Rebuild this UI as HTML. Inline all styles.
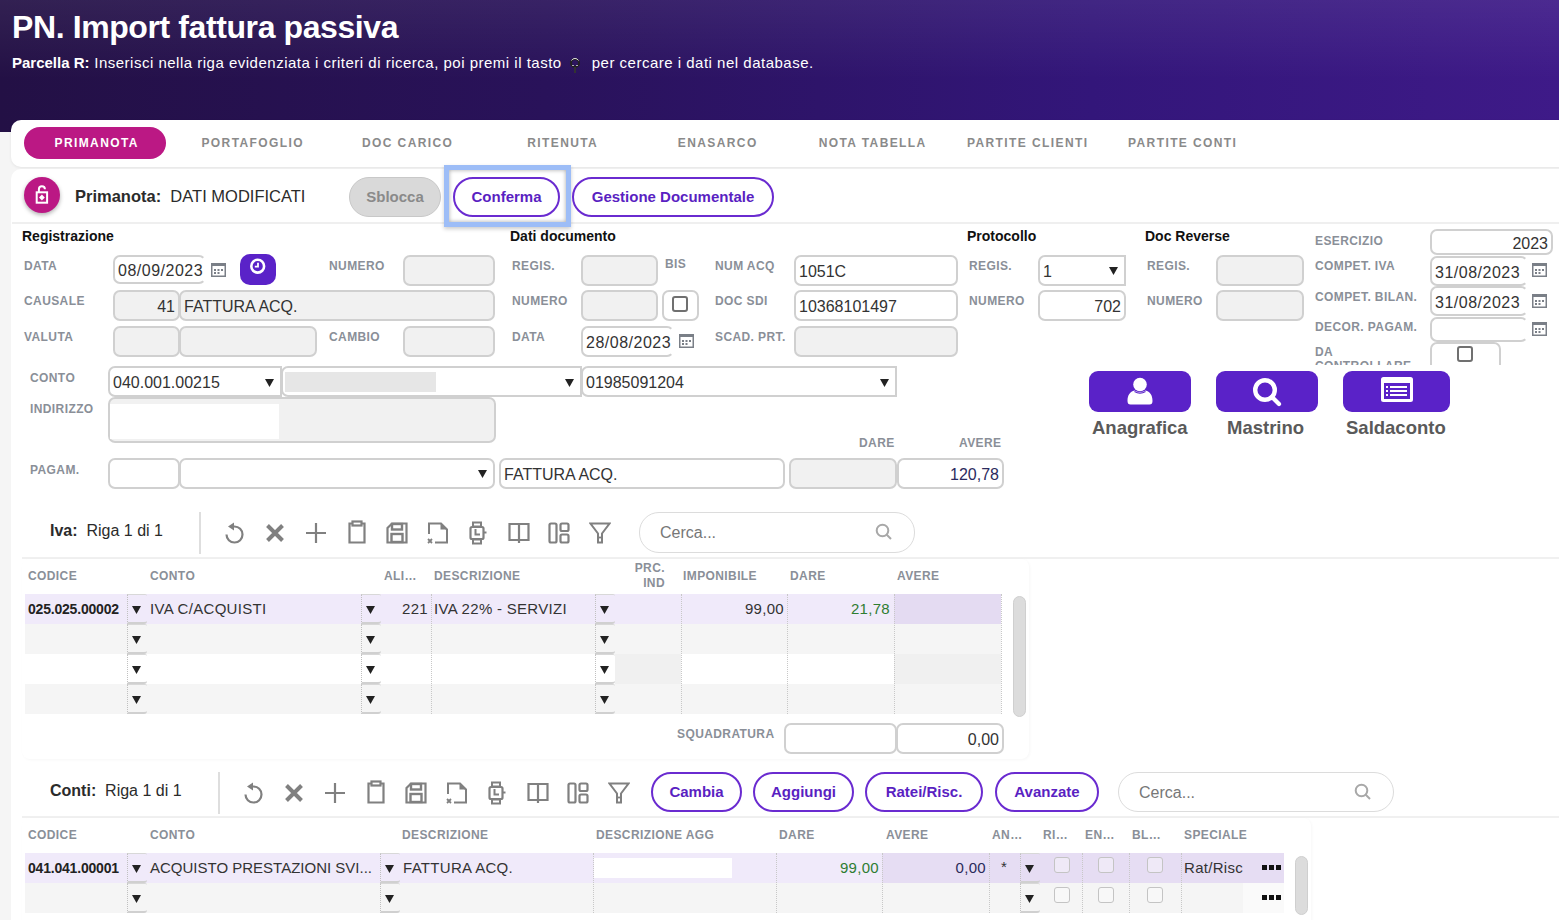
<!DOCTYPE html>
<html><head><meta charset="utf-8">
<style>
*{box-sizing:border-box;margin:0;padding:0}
html,body{width:1559px;height:920px;overflow:hidden;background:#f5f5f5;font-family:"Liberation Sans",sans-serif;color:#333}
.a{position:absolute}
#hdr{position:absolute;left:0;top:0;width:1559px;height:132px;background:linear-gradient(90deg,#231045 0%,#29125a 35%,#33167a 70%,#3e1a88 100%)}
#hdr:after{content:"";position:absolute;left:0;top:0;right:0;bottom:0;background:linear-gradient(180deg,rgba(255,255,255,.07),rgba(255,255,255,0) 60%)}
.title{left:12px;top:9px;font-size:32px;letter-spacing:-.4px;font-weight:bold;color:#fff;white-space:nowrap}
.sub{left:12px;top:54px;font-size:15px;letter-spacing:.5px;color:#fff;white-space:nowrap}
.card{position:absolute;background:#fff}
.tab{position:absolute;top:127px;height:32px;width:142px;text-align:center;line-height:33px;font-size:12px;font-weight:bold;letter-spacing:1.4px;padding-left:3.4px;color:#8a8a8a}
.tab.on{background:#bb1884;color:#fff;border-radius:16px}
.lb{position:absolute;font-size:12px;font-weight:bold;color:#8a8f98;letter-spacing:.4px;white-space:nowrap;line-height:14px}
.h{position:absolute;font-size:14px;font-weight:bold;color:#111;white-space:nowrap;line-height:16px}
.in{position:absolute;border:2px solid #d0d0d0;border-radius:7px;background:#fff;font-size:16px;color:#333;padding:1px 3px 0;white-space:nowrap;overflow:hidden}
.g{background:#f1f1f1}
.r{text-align:right}
.pill{position:absolute;height:40px;border-radius:20px;border:2px solid #6a2bd0;background:#fff;color:#5a1fc2;font-weight:bold;font-size:15px;text-align:center;line-height:36px;white-space:nowrap}
</style></head><body>
<div id="hdr"></div>
<div class="a title">PN. Import fattura passiva</div>
<svg class="a" style="left:569px;top:57px" width="12" height="17" viewBox="0 0 12 17"><circle cx="6" cy="6" r="4" fill="none" stroke="#222" stroke-width="2"/><path d="M2.5 3.5a4 4 0 0 1 7 0" fill="none" stroke="#ddd" stroke-width="1"/><path d="M6 10V16" stroke="#333" stroke-width="2"/><path d="M3.3 8.5h1.4M7.3 8.5h1.4" stroke="#eee" stroke-width="1"/></svg>
<div class="a sub"><b style="letter-spacing:0">Parcella R:</b> Inserisci nella riga evidenziata i criteri di ricerca, poi premi il tasto<span style="display:inline-block;width:30px"></span>per cercare i dati nel database.</div>
<div class="card" style="left:11px;top:120px;width:1560px;height:47px;border-radius:10px 0 0 10px;box-shadow:0 1px 3px rgba(0,0,0,.07)"></div>
<div class="tab on" style="left:24px">PRIMANOTA</div>
<div class="tab" style="left:180px">PORTAFOGLIO</div>
<div class="tab" style="left:335px">DOC CARICO</div>
<div class="tab" style="left:490px">RITENUTA</div>
<div class="tab" style="left:645px">ENASARCO</div>
<div class="tab" style="left:800px">NOTA TABELLA</div>
<div class="tab" style="left:955px">PARTITE CLIENTI</div>
<div class="tab" style="left:1110px">PARTITE CONTI</div>
<div class="card" style="left:11px;top:169px;width:1560px;height:760px;border-radius:10px 0 0 0"></div>
<div class="a" style="left:12px;top:222px;width:1560px;height:1.5px;background:#efefef"></div>
<div class="a" style="left:24px;top:177px;width:36px;height:36px;border-radius:50%;background:#bb1884;box-shadow:0 2px 4px rgba(0,0,0,.3)"></div>
<svg class="a" style="left:34px;top:184px" width="16" height="22" viewBox="0 0 16 22"><path d="M4.9 8.3V5.2A3 3 0 0 1 10.9 5.2" fill="none" stroke="#fff" stroke-width="2"/><rect x="2.7" y="8.3" width="10.4" height="10.4" fill="none" stroke="#fff" stroke-width="2"/><path d="M7.9 10.6L10.8 13.5L7.9 16.4L5 13.5z" fill="#fff"/></svg>
<div class="a" style="left:75px;top:187px;font-size:16.5px;color:#2b2b2b;white-space:nowrap"><b>Primanota:</b>&nbsp; DATI MODIFICATI</div>
<div class="a" style="left:349px;top:177px;width:92px;height:40px;border-radius:20px;background:#d9d9d9;border:1.5px solid #c8c8c8;color:#8a8a8a;font-weight:bold;font-size:15px;text-align:center;line-height:37px">Sblocca</div>
<div class="a" style="left:444px;top:165px;width:127px;height:62px;border:5px solid #9dbdf7;box-shadow:inset 0 0 4px rgba(0,0,0,.35),0 2px 4px rgba(0,0,0,.2)"></div>
<div class="pill" style="left:453px;top:177px;width:107px">Conferma</div>
<div class="pill" style="left:572px;top:177px;width:202px">Gestione Documentale</div>
<div class="h" style="left:22px;top:228px">Registrazione</div>
<div class="h" style="left:510px;top:228px">Dati documento</div>
<div class="h" style="left:967px;top:228px">Protocollo</div>
<div class="h" style="left:1145px;top:228px">Doc Reverse</div>
<div class="lb" style="left:24px;top:258.5px;">DATA</div>
<div class="in" style="left:113px;top:255px;width:93px;height:29px;line-height:26px;border-right-color:transparent;letter-spacing:.5px">08/09/2023</div>
<svg class="a" style="left:211px;top:263px" width="15" height="14" viewBox="0 0 15 14"><rect x="0.75" y="0.75" width="13.5" height="12.5" fill="none" stroke="#7a7f87" stroke-width="1.5"/><rect x="0" y="0" width="15" height="3" fill="#7a7f87"/><rect x="3" y="6" width="2" height="2" fill="#7a7f87"/><rect x="6.5" y="6" width="2" height="2" fill="#7a7f87"/><rect x="10" y="6" width="2" height="2" fill="#7a7f87"/><rect x="3" y="9" width="2" height="2" fill="#7a7f87"/><rect x="6.5" y="9" width="2" height="2" fill="#7a7f87"/></svg>
<div class="a" style="left:240px;top:254px;width:36px;height:31px;border-radius:10px;background:#5a22c8"></div>
<svg class="a" style="left:249px;top:257px" width="18" height="18" viewBox="0 0 18 18"><circle cx="8.7" cy="9.2" r="6.4" fill="none" stroke="#fff" stroke-width="2.6"/><path d="M9 5.8V9.6H5.8" fill="none" stroke="#fff" stroke-width="1.8"/></svg>
<div class="lb" style="left:329px;top:258.5px;">NUMERO</div>
<div class="in g" style="left:403px;top:255px;width:92px;height:31px;line-height:28px;"></div>
<div class="lb" style="left:24px;top:293.5px;">CAUSALE</div>
<div class="in g r" style="left:113px;top:290px;width:67px;height:31px;line-height:28px;">41</div>
<div class="in g" style="left:179px;top:290px;width:316px;height:31px;line-height:28px;">FATTURA ACQ.</div>
<div class="lb" style="left:24px;top:329.5px;">VALUTA</div>
<div class="in g" style="left:113px;top:326px;width:67px;height:31px;line-height:28px;"></div>
<div class="in g" style="left:179px;top:326px;width:138px;height:31px;line-height:28px;"></div>
<div class="lb" style="left:329px;top:329.5px;">CAMBIO</div>
<div class="in g" style="left:403px;top:326px;width:92px;height:31px;line-height:28px;"></div>
<div class="lb" style="left:512px;top:258.5px;">REGIS.</div>
<div class="in g" style="left:581px;top:255px;width:77px;height:31px;line-height:28px;"></div>
<div class="lb" style="left:665px;top:256.5px;">BIS</div>
<div class="lb" style="left:512px;top:293.5px;">NUMERO</div>
<div class="in g" style="left:581px;top:290px;width:77px;height:31px;line-height:28px;"></div>
<div class="in" style="left:662px;top:290px;width:37px;height:31px;line-height:28px;"></div>
<div class="a" style="left:672px;top:295.5px;width:16px;height:16px;border:2px solid #707070;border-radius:3px;background:#fff"></div>
<div class="lb" style="left:512px;top:329.5px;">DATA</div>
<div class="in" style="left:581px;top:326px;width:93px;height:31px;line-height:28px;border-right-color:transparent;letter-spacing:.5px">28/08/2023</div>
<svg class="a" style="left:679px;top:334px" width="15" height="14" viewBox="0 0 15 14"><rect x="0.75" y="0.75" width="13.5" height="12.5" fill="none" stroke="#7a7f87" stroke-width="1.5"/><rect x="0" y="0" width="15" height="3" fill="#7a7f87"/><rect x="3" y="6" width="2" height="2" fill="#7a7f87"/><rect x="6.5" y="6" width="2" height="2" fill="#7a7f87"/><rect x="10" y="6" width="2" height="2" fill="#7a7f87"/><rect x="3" y="9" width="2" height="2" fill="#7a7f87"/><rect x="6.5" y="9" width="2" height="2" fill="#7a7f87"/></svg>
<div class="lb" style="left:715px;top:258.5px;">NUM ACQ</div>
<div class="in" style="left:794px;top:255px;width:164px;height:31px;line-height:28px;">1051C</div>
<div class="lb" style="left:715px;top:293.5px;">DOC SDI</div>
<div class="in" style="left:794px;top:290px;width:164px;height:31px;line-height:28px;">10368101497</div>
<div class="lb" style="left:715px;top:329.5px;">SCAD. PRT.</div>
<div class="in g" style="left:794px;top:326px;width:164px;height:31px;line-height:28px;"></div>
<div class="lb" style="left:969px;top:258.5px;">REGIS.</div>
<div class="in" style="left:1038px;top:255px;width:88px;height:31px;line-height:28px;border-radius:7px 0 0 7px">1</div>
<svg class="a" style="left:1109px;top:267px" width="9" height="8" viewBox="0 0 9 8"><path d="M0 0H9L4.5 8z" fill="#222"/></svg>
<div class="lb" style="left:969px;top:293.5px;">NUMERO</div>
<div class="in r" style="left:1038px;top:290px;width:88px;height:31px;line-height:28px;">702</div>
<div class="lb" style="left:1147px;top:258.5px;">REGIS.</div>
<div class="in g" style="left:1216px;top:255px;width:88px;height:31px;line-height:28px;"></div>
<div class="lb" style="left:1147px;top:293.5px;">NUMERO</div>
<div class="in g" style="left:1216px;top:290px;width:88px;height:31px;line-height:28px;"></div>
<div class="lb" style="left:1315px;top:233.5px;">ESERCIZIO</div>
<div class="in r" style="left:1430px;top:229px;width:123px;height:26px;line-height:23px;">2023</div>
<div class="lb" style="left:1315px;top:258.5px;">COMPET. IVA</div>
<div class="in" style="left:1430px;top:256px;width:98px;height:30px;line-height:27px;border-right-color:transparent;letter-spacing:.5px">31/08/2023</div>
<svg class="a" style="left:1532px;top:263px" width="15" height="14" viewBox="0 0 15 14"><rect x="0.75" y="0.75" width="13.5" height="12.5" fill="none" stroke="#7a7f87" stroke-width="1.5"/><rect x="0" y="0" width="15" height="3" fill="#7a7f87"/><rect x="3" y="6" width="2" height="2" fill="#7a7f87"/><rect x="6.5" y="6" width="2" height="2" fill="#7a7f87"/><rect x="10" y="6" width="2" height="2" fill="#7a7f87"/><rect x="3" y="9" width="2" height="2" fill="#7a7f87"/><rect x="6.5" y="9" width="2" height="2" fill="#7a7f87"/></svg>
<div class="lb" style="left:1315px;top:289.5px;">COMPET. BILAN.</div>
<div class="in" style="left:1430px;top:286px;width:98px;height:30px;line-height:27px;border-right-color:transparent;letter-spacing:.5px">31/08/2023</div>
<svg class="a" style="left:1532px;top:294px" width="15" height="14" viewBox="0 0 15 14"><rect x="0.75" y="0.75" width="13.5" height="12.5" fill="none" stroke="#7a7f87" stroke-width="1.5"/><rect x="0" y="0" width="15" height="3" fill="#7a7f87"/><rect x="3" y="6" width="2" height="2" fill="#7a7f87"/><rect x="6.5" y="6" width="2" height="2" fill="#7a7f87"/><rect x="10" y="6" width="2" height="2" fill="#7a7f87"/><rect x="3" y="9" width="2" height="2" fill="#7a7f87"/><rect x="6.5" y="9" width="2" height="2" fill="#7a7f87"/></svg>
<div class="lb" style="left:1315px;top:319.5px;">DECOR. PAGAM.</div>
<div class="in" style="left:1430px;top:317px;width:98px;height:25px;line-height:22px;border-right-color:transparent"></div>
<svg class="a" style="left:1532px;top:322px" width="15" height="14" viewBox="0 0 15 14"><rect x="0.75" y="0.75" width="13.5" height="12.5" fill="none" stroke="#7a7f87" stroke-width="1.5"/><rect x="0" y="0" width="15" height="3" fill="#7a7f87"/><rect x="3" y="6" width="2" height="2" fill="#7a7f87"/><rect x="6.5" y="6" width="2" height="2" fill="#7a7f87"/><rect x="10" y="6" width="2" height="2" fill="#7a7f87"/><rect x="3" y="9" width="2" height="2" fill="#7a7f87"/><rect x="6.5" y="9" width="2" height="2" fill="#7a7f87"/></svg>
<div class="a" style="left:1300px;top:342px;width:259px;height:23px;overflow:hidden">
<div class="lb" style="left:15px;top:3px;line-height:14px">DA<br>CONTROLLARE</div>
<div class="in" style="left:130px;top:0px;width:71px;height:30px"></div>
</div>
<div class="a" style="left:1457px;top:346px;width:16px;height:16px;border:2px solid #707070;border-radius:3px;background:#fff"></div>
<div class="lb" style="left:30px;top:370.5px;">CONTO</div>
<div class="in" style="left:108px;top:366px;width:174px;height:31px;line-height:28px;border-radius:7px 0 0 7px">040.001.00215</div>
<svg class="a" style="left:264.5px;top:379px" width="9" height="8" viewBox="0 0 9 8"><path d="M0 0H9L4.5 8z" fill="#222"/></svg>
<div class="in" style="left:281px;top:366px;width:301px;height:31px;line-height:28px;border-radius:7px 0 0 7px"></div>
<div class="a" style="left:285px;top:372px;width:151px;height:20px;background:#e6e6e6"></div>
<svg class="a" style="left:564.5px;top:379px" width="9" height="8" viewBox="0 0 9 8"><path d="M0 0H9L4.5 8z" fill="#222"/></svg>
<div class="in" style="left:581px;top:366px;width:316px;height:31px;line-height:28px;border-radius:7px 0 0 7px">01985091204</div>
<svg class="a" style="left:879.5px;top:379px" width="9" height="8" viewBox="0 0 9 8"><path d="M0 0H9L4.5 8z" fill="#222"/></svg>
<div class="lb" style="left:30px;top:401.5px;">INDIRIZZO</div>
<div class="in g" style="left:108px;top:397px;width:388px;height:46px;line-height:43px;"></div>
<div class="a" style="left:110px;top:404px;width:169px;height:35px;background:#fff"></div>
<div class="a" style="left:1089px;top:371px;width:102px;height:41px;border-radius:9px;background:#5a22c8"></div>
<svg class="a" style="left:1126px;top:377px" width="28" height="29" viewBox="0 0 28 29"><circle cx="14" cy="7.5" r="6.8" fill="#fff"/><path d="M1.5 24c0-6 2.5-9.5 7-10.5q5.5 3 11 0c4.5 1 7 4.5 7 10.5q0 3.5-3 3.5h-19q-3 0-3-3.5z" fill="#fff"/><path d="M8.5 14.5q5.5 3.2 11 0" fill="none" stroke="#5a22c8" stroke-width="1.2"/></svg>
<div class="a" style="left:1092px;top:417px;font-size:18.5px;font-weight:bold;color:#5a5a5a;white-space:nowrap">Anagrafica</div>
<div class="a" style="left:1216px;top:371px;width:102px;height:41px;border-radius:9px;background:#5a22c8"></div>
<svg class="a" style="left:1251px;top:376px" width="32" height="32" viewBox="0 0 32 32"><circle cx="14" cy="14" r="9.8" fill="none" stroke="#fff" stroke-width="4.4"/><path d="M21 21L28 28" stroke="#fff" stroke-width="4.2" stroke-linecap="round"/></svg>
<div class="a" style="left:1227px;top:417px;font-size:18.5px;font-weight:bold;color:#5a5a5a;white-space:nowrap">Mastrino</div>
<div class="a" style="left:1343px;top:371px;width:107px;height:41px;border-radius:9px;background:#5a22c8"></div>
<svg class="a" style="left:1381px;top:377px" width="32" height="25" viewBox="0 0 32 25"><rect x="1.5" y="1.5" width="29" height="22" rx="1" fill="none" stroke="#fff" stroke-width="3"/><rect x="1" y="1" width="30" height="5" fill="#fff"/><path d="M9 10H26M9 14H26M9 18H26" stroke="#fff" stroke-width="2.2"/><path d="M5 10H7M5 14H7M5 18H7" stroke="#fff" stroke-width="2.2"/></svg>
<div class="a" style="left:1346px;top:417px;font-size:18.5px;font-weight:bold;color:#5a5a5a;white-space:nowrap">Saldaconto</div>
<div class="lb" style="left:859px;top:435.5px;">DARE</div>
<div class="lb" style="left:959px;top:435.5px;">AVERE</div>
<div class="lb" style="left:30px;top:462.5px;">PAGAM.</div>
<div class="in" style="left:108px;top:458px;width:72px;height:31px;line-height:28px;"></div>
<div class="in" style="left:179px;top:458px;width:316px;height:31px;line-height:28px;"></div>
<svg class="a" style="left:478px;top:470px" width="9" height="8" viewBox="0 0 9 8"><path d="M0 0H9L4.5 8z" fill="#222"/></svg>
<div class="in" style="left:499px;top:458px;width:286px;height:31px;line-height:28px;">FATTURA ACQ.</div>
<div class="in g" style="left:789px;top:458px;width:108px;height:31px;line-height:28px;"></div>
<div class="in r" style="left:897px;top:458px;width:107px;height:31px;line-height:28px;color:#2b2b5e">120,78</div>
<div class="a" style="left:22px;top:557px;width:1537px;height:2px;background:#f0f0f0"></div>
<div class="a" style="left:22px;top:559px;width:1007px;height:200px;border-radius:8px;box-shadow:1px 1px 3px rgba(0,0,0,.035);background:#fff"></div>
<div class="a" style="left:50px;top:522px;font-size:16px;color:#2b2b2b;white-space:nowrap"><b>Iva:</b>&nbsp; Riga 1 di 1</div>
<div class="a" style="left:199px;top:512px;width:2px;height:42px;background:#dedede"></div>
<div class="a" style="left:223.5px;top:521px;line-height:0"><svg width="22" height="24" viewBox="0 0 22 24"><path d="M2.5 13.5a8 8 0 1 0 8-8H8" fill="none" stroke="#808080" stroke-width="2.2"/><path d="M10 1.5L4 5.5l6 4z" fill="#808080"/></svg></div>
<div class="a" style="left:265.1px;top:523px;line-height:0"><svg width="20" height="20" viewBox="0 0 20 20"><path d="M2.5 2.5L17.5 17.5M17.5 2.5L2.5 17.5" stroke="#808080" stroke-width="4"/></svg></div>
<div class="a" style="left:304.7px;top:522px;line-height:0"><svg width="22" height="22" viewBox="0 0 22 22"><path d="M11 1V21M1 11H21" stroke="#808080" stroke-width="2.2"/></svg></div>
<div class="a" style="left:347.8px;top:520px;line-height:0"><svg width="18" height="24" viewBox="0 0 18 24"><path d="M4.5 3.5H1.5V22.5H16.5V3.5H13.5" fill="none" stroke="#808080" stroke-width="2.2"/><rect x="4.5" y="1.5" width="9" height="4" fill="none" stroke="#808080" stroke-width="2.2"/></svg></div>
<div class="a" style="left:385.9px;top:522px;line-height:0"><svg width="22" height="22" viewBox="0 0 22 22"><path d="M1.5 6L6 1.5H20.5V20.5H1.5z" fill="none" stroke="#808080" stroke-width="2.2"/><rect x="6" y="2" width="10" height="5.5" fill="none" stroke="#808080" stroke-width="2.4"/><rect x="5.5" y="12" width="11" height="8" fill="none" stroke="#808080" stroke-width="2.4"/></svg></div>
<div class="a" style="left:426.5px;top:522px;line-height:0"><svg width="22" height="22" viewBox="0 0 22 22"><path d="M2 12V1.5H14L20 7.5V20.5H8" fill="none" stroke="#808080" stroke-width="2"/><path d="M13.5 1.5V7.5H20z" fill="#808080"/><path d="M1 17l4 4M5 17l-4 4" stroke="#808080" stroke-width="1.8"/></svg></div>
<div class="a" style="left:469.1px;top:521px;line-height:0"><svg width="18" height="24" viewBox="0 0 18 24"><rect x="4" y="1.5" width="8" height="4" fill="none" stroke="#808080" stroke-width="2"/><rect x="4" y="18.5" width="8" height="4" fill="none" stroke="#808080" stroke-width="2"/><rect x="1.5" y="6" width="13" height="12" rx="1.5" fill="none" stroke="#808080" stroke-width="2.2"/><path d="M15 11.5H17.5" stroke="#808080" stroke-width="2"/><path d="M6.5 8V13.5H11" fill="none" stroke="#808080" stroke-width="2"/></svg></div>
<div class="a" style="left:507.7px;top:522px;line-height:0"><svg width="22" height="22" viewBox="0 0 22 22"><path d="M1.5 2H20.5V18H1.5z M11 2V21" fill="none" stroke="#808080" stroke-width="2.2"/></svg></div>
<div class="a" style="left:548.3px;top:522px;line-height:0"><svg width="22" height="22" viewBox="0 0 22 22"><rect x="1.5" y="1.5" width="7" height="19" rx="1.5" fill="none" stroke="#808080" stroke-width="2.2"/><rect x="12.5" y="1.5" width="8" height="7.5" rx="1.5" fill="none" stroke="#808080" stroke-width="2.2"/><rect x="12.5" y="12.5" width="8" height="8" rx="1.5" fill="none" stroke="#808080" stroke-width="2.2"/></svg></div>
<div class="a" style="left:588.9px;top:522px;line-height:0"><svg width="22" height="22" viewBox="0 0 22 22"><path d="M1.5 1.5H20.5L13 11.5V20.5H9V11.5z" fill="none" stroke="#808080" stroke-width="2"/><path d="M9 15.5H13" stroke="#808080" stroke-width="1.8"/></svg></div>
<div class="a" style="left:639px;top:512px;width:276px;height:41px;border:1.5px solid #dcdcdc;border-radius:20px;background:#fff"></div>
<div class="a" style="left:660px;top:524px;font-size:16px;color:#777;white-space:nowrap">Cerca...</div>
<svg class="a" style="left:875px;top:523px" width="20" height="18" viewBox="0 0 20 18"><circle cx="7.5" cy="7.5" r="5.8" fill="none" stroke="#a8a8a8" stroke-width="2"/><path d="M11.5 11.5L16 16" stroke="#a8a8a8" stroke-width="2"/></svg>
<div class="lb" style="left:28px;top:569px;">CODICE</div>
<div class="lb" style="left:150px;top:569px;">CONTO</div>
<div class="lb" style="left:384px;top:569px;">ALI…</div>
<div class="lb" style="left:434px;top:569px;">DESCRIZIONE</div>
<div class="lb" style="left:683px;top:569px;">IMPONIBILE</div>
<div class="lb" style="left:790px;top:569px;">DARE</div>
<div class="lb" style="left:897px;top:569px;">AVERE</div>
<div class="lb" style="left:620px;top:561px;width:45px;text-align:right;line-height:15px">PRC.<br>IND</div>
<div class="a" style="left:25px;top:594px;width:976px;height:30px;background:#f0eafa"></div>
<div class="a" style="left:894px;top:594px;width:107px;height:30px;background:#e4dbf2"></div>
<div class="a" style="left:25px;top:624px;width:976px;height:30px;background:#f5f5f5"></div>
<div class="a" style="left:25px;top:654px;width:976px;height:30px;background:#ffffff"></div>
<div class="a" style="left:615px;top:654px;width:66px;height:30px;background:#f0f0f0"></div><div class="a" style="left:894px;top:654px;width:107px;height:30px;background:#f0f0f0"></div>
<div class="a" style="left:25px;top:684px;width:976px;height:30px;background:#f5f5f5"></div>
<div class="a" style="left:431px;top:594px;width:0;height:120px;border-left:1px dotted #c8c8c8"></div>
<div class="a" style="left:681px;top:594px;width:0;height:120px;border-left:1px dotted #c8c8c8"></div>
<div class="a" style="left:787px;top:594px;width:0;height:120px;border-left:1px dotted #c8c8c8"></div>
<div class="a" style="left:894px;top:594px;width:0;height:120px;border-left:1px dotted #c8c8c8"></div>
<div class="a" style="left:1001px;top:594px;width:0;height:120px;border-left:1px dotted #c8c8c8"></div>
<div class="a" style="left:127px;top:594px;width:20px;height:30px;border-left:1px dotted #c0c0c0;border-top:1px solid #d8d8d8;border-bottom:2px solid #d0d0d0;border-radius:0 2px 3px 0"></div>
<svg class="a" style="left:131.5px;top:605.5px" width="9" height="8" viewBox="0 0 9 8"><path d="M0 0H9L4.5 8z" fill="#222"/></svg>
<div class="a" style="left:361px;top:594px;width:20px;height:30px;border-left:1px dotted #c0c0c0;border-top:1px solid #d8d8d8;border-bottom:2px solid #d0d0d0;border-radius:0 2px 3px 0"></div>
<svg class="a" style="left:365.5px;top:605.5px" width="9" height="8" viewBox="0 0 9 8"><path d="M0 0H9L4.5 8z" fill="#222"/></svg>
<div class="a" style="left:595px;top:594px;width:20px;height:30px;border-left:1px dotted #c0c0c0;border-top:1px solid #d8d8d8;border-bottom:2px solid #d0d0d0;border-radius:0 2px 3px 0"></div>
<svg class="a" style="left:599.5px;top:605.5px" width="9" height="8" viewBox="0 0 9 8"><path d="M0 0H9L4.5 8z" fill="#222"/></svg>
<div class="a" style="left:127px;top:624px;width:20px;height:30px;border-left:1px dotted #c0c0c0;border-top:1px solid #d8d8d8;border-bottom:2px solid #d0d0d0;border-radius:0 2px 3px 0"></div>
<svg class="a" style="left:131.5px;top:635.5px" width="9" height="8" viewBox="0 0 9 8"><path d="M0 0H9L4.5 8z" fill="#222"/></svg>
<div class="a" style="left:361px;top:624px;width:20px;height:30px;border-left:1px dotted #c0c0c0;border-top:1px solid #d8d8d8;border-bottom:2px solid #d0d0d0;border-radius:0 2px 3px 0"></div>
<svg class="a" style="left:365.5px;top:635.5px" width="9" height="8" viewBox="0 0 9 8"><path d="M0 0H9L4.5 8z" fill="#222"/></svg>
<div class="a" style="left:595px;top:624px;width:20px;height:30px;border-left:1px dotted #c0c0c0;border-top:1px solid #d8d8d8;border-bottom:2px solid #d0d0d0;border-radius:0 2px 3px 0"></div>
<svg class="a" style="left:599.5px;top:635.5px" width="9" height="8" viewBox="0 0 9 8"><path d="M0 0H9L4.5 8z" fill="#222"/></svg>
<div class="a" style="left:127px;top:654px;width:20px;height:30px;border-left:1px dotted #c0c0c0;border-top:1px solid #d8d8d8;border-bottom:2px solid #d0d0d0;border-radius:0 2px 3px 0"></div>
<svg class="a" style="left:131.5px;top:665.5px" width="9" height="8" viewBox="0 0 9 8"><path d="M0 0H9L4.5 8z" fill="#222"/></svg>
<div class="a" style="left:361px;top:654px;width:20px;height:30px;border-left:1px dotted #c0c0c0;border-top:1px solid #d8d8d8;border-bottom:2px solid #d0d0d0;border-radius:0 2px 3px 0"></div>
<svg class="a" style="left:365.5px;top:665.5px" width="9" height="8" viewBox="0 0 9 8"><path d="M0 0H9L4.5 8z" fill="#222"/></svg>
<div class="a" style="left:595px;top:654px;width:20px;height:30px;border-left:1px dotted #c0c0c0;border-top:1px solid #d8d8d8;border-bottom:2px solid #d0d0d0;border-radius:0 2px 3px 0"></div>
<svg class="a" style="left:599.5px;top:665.5px" width="9" height="8" viewBox="0 0 9 8"><path d="M0 0H9L4.5 8z" fill="#222"/></svg>
<div class="a" style="left:127px;top:684px;width:20px;height:30px;border-left:1px dotted #c0c0c0;border-top:1px solid #d8d8d8;border-bottom:2px solid #d0d0d0;border-radius:0 2px 3px 0"></div>
<svg class="a" style="left:131.5px;top:695.5px" width="9" height="8" viewBox="0 0 9 8"><path d="M0 0H9L4.5 8z" fill="#222"/></svg>
<div class="a" style="left:361px;top:684px;width:20px;height:30px;border-left:1px dotted #c0c0c0;border-top:1px solid #d8d8d8;border-bottom:2px solid #d0d0d0;border-radius:0 2px 3px 0"></div>
<svg class="a" style="left:365.5px;top:695.5px" width="9" height="8" viewBox="0 0 9 8"><path d="M0 0H9L4.5 8z" fill="#222"/></svg>
<div class="a" style="left:595px;top:684px;width:20px;height:30px;border-left:1px dotted #c0c0c0;border-top:1px solid #d8d8d8;border-bottom:2px solid #d0d0d0;border-radius:0 2px 3px 0"></div>
<svg class="a" style="left:599.5px;top:695.5px" width="9" height="8" viewBox="0 0 9 8"><path d="M0 0H9L4.5 8z" fill="#222"/></svg>
<div class="a" style="left:28px;top:601px;font-size:14px;color:#222;white-space:nowrap;font-weight:bold;letter-spacing:-.2px">025.025.00002</div>
<div class="a" style="left:150px;top:600px;font-size:15px;color:#333;white-space:nowrap;letter-spacing:.3px">IVA C/ACQUISTI</div>
<div class="a" style="left:378px;top:600px;width:50px;text-align:right;font-size:15px;color:#333;white-space:nowrap;letter-spacing:.3px">221</div>
<div class="a" style="left:434px;top:600px;font-size:15px;color:#333;white-space:nowrap;letter-spacing:.3px">IVA 22% - SERVIZI</div>
<div class="a" style="left:704px;top:600px;width:80px;text-align:right;font-size:15px;color:#333;white-space:nowrap;letter-spacing:.3px">99,00</div>
<div class="a" style="left:810px;top:600px;width:80px;text-align:right;font-size:15px;color:#2e7d32;white-space:nowrap;letter-spacing:.3px">21,78</div>
<div class="a" style="left:1013px;top:596px;width:13px;height:121px;border-radius:7px;background:#dcdcdc;border:1px solid #cfcfcf"></div>
<div class="lb" style="left:677px;top:726.5px;">SQUADRATURA</div>
<div class="in" style="left:784px;top:723px;width:113px;height:31px;line-height:28px;"></div>
<div class="in r" style="left:896px;top:723px;width:108px;height:31px;line-height:28px;">0,00</div>
<div class="a" style="left:22px;top:816px;width:1537px;height:2px;background:#f0f0f0"></div>
<div class="a" style="left:22px;top:818px;width:1289px;height:110px;border-radius:8px;box-shadow:1px 1px 3px rgba(0,0,0,.035);background:#fff"></div>
<div class="a" style="left:50px;top:782px;font-size:16px;color:#2b2b2b;white-space:nowrap"><b>Conti:</b>&nbsp; Riga 1 di 1</div>
<div class="a" style="left:218px;top:772px;width:2px;height:42px;background:#dedede"></div>
<div class="a" style="left:242.5px;top:781px;line-height:0"><svg width="22" height="24" viewBox="0 0 22 24"><path d="M2.5 13.5a8 8 0 1 0 8-8H8" fill="none" stroke="#808080" stroke-width="2.2"/><path d="M10 1.5L4 5.5l6 4z" fill="#808080"/></svg></div>
<div class="a" style="left:284.1px;top:783px;line-height:0"><svg width="20" height="20" viewBox="0 0 20 20"><path d="M2.5 2.5L17.5 17.5M17.5 2.5L2.5 17.5" stroke="#808080" stroke-width="4"/></svg></div>
<div class="a" style="left:323.7px;top:782px;line-height:0"><svg width="22" height="22" viewBox="0 0 22 22"><path d="M11 1V21M1 11H21" stroke="#808080" stroke-width="2.2"/></svg></div>
<div class="a" style="left:366.8px;top:780px;line-height:0"><svg width="18" height="24" viewBox="0 0 18 24"><path d="M4.5 3.5H1.5V22.5H16.5V3.5H13.5" fill="none" stroke="#808080" stroke-width="2.2"/><rect x="4.5" y="1.5" width="9" height="4" fill="none" stroke="#808080" stroke-width="2.2"/></svg></div>
<div class="a" style="left:404.9px;top:782px;line-height:0"><svg width="22" height="22" viewBox="0 0 22 22"><path d="M1.5 6L6 1.5H20.5V20.5H1.5z" fill="none" stroke="#808080" stroke-width="2.2"/><rect x="6" y="2" width="10" height="5.5" fill="none" stroke="#808080" stroke-width="2.4"/><rect x="5.5" y="12" width="11" height="8" fill="none" stroke="#808080" stroke-width="2.4"/></svg></div>
<div class="a" style="left:445.5px;top:782px;line-height:0"><svg width="22" height="22" viewBox="0 0 22 22"><path d="M2 12V1.5H14L20 7.5V20.5H8" fill="none" stroke="#808080" stroke-width="2"/><path d="M13.5 1.5V7.5H20z" fill="#808080"/><path d="M1 17l4 4M5 17l-4 4" stroke="#808080" stroke-width="1.8"/></svg></div>
<div class="a" style="left:488.1px;top:781px;line-height:0"><svg width="18" height="24" viewBox="0 0 18 24"><rect x="4" y="1.5" width="8" height="4" fill="none" stroke="#808080" stroke-width="2"/><rect x="4" y="18.5" width="8" height="4" fill="none" stroke="#808080" stroke-width="2"/><rect x="1.5" y="6" width="13" height="12" rx="1.5" fill="none" stroke="#808080" stroke-width="2.2"/><path d="M15 11.5H17.5" stroke="#808080" stroke-width="2"/><path d="M6.5 8V13.5H11" fill="none" stroke="#808080" stroke-width="2"/></svg></div>
<div class="a" style="left:526.7px;top:782px;line-height:0"><svg width="22" height="22" viewBox="0 0 22 22"><path d="M1.5 2H20.5V18H1.5z M11 2V21" fill="none" stroke="#808080" stroke-width="2.2"/></svg></div>
<div class="a" style="left:567.3px;top:782px;line-height:0"><svg width="22" height="22" viewBox="0 0 22 22"><rect x="1.5" y="1.5" width="7" height="19" rx="1.5" fill="none" stroke="#808080" stroke-width="2.2"/><rect x="12.5" y="1.5" width="8" height="7.5" rx="1.5" fill="none" stroke="#808080" stroke-width="2.2"/><rect x="12.5" y="12.5" width="8" height="8" rx="1.5" fill="none" stroke="#808080" stroke-width="2.2"/></svg></div>
<div class="a" style="left:607.9px;top:782px;line-height:0"><svg width="22" height="22" viewBox="0 0 22 22"><path d="M1.5 1.5H20.5L13 11.5V20.5H9V11.5z" fill="none" stroke="#808080" stroke-width="2"/><path d="M9 15.5H13" stroke="#808080" stroke-width="1.8"/></svg></div>
<div class="pill" style="left:651px;top:772px;width:91px;height:40px">Cambia</div>
<div class="pill" style="left:753px;top:772px;width:101px;height:40px">Aggiungi</div>
<div class="pill" style="left:865px;top:772px;width:118px;height:40px">Ratei/Risc.</div>
<div class="pill" style="left:995px;top:772px;width:104px;height:40px">Avanzate</div>
<div class="a" style="left:1118px;top:772px;width:276px;height:40px;border:1.5px solid #dcdcdc;border-radius:20px;background:#fff"></div>
<div class="a" style="left:1139px;top:784px;font-size:16px;color:#777;white-space:nowrap">Cerca...</div>
<svg class="a" style="left:1354px;top:783px" width="20" height="18" viewBox="0 0 20 18"><circle cx="7.5" cy="7.5" r="5.8" fill="none" stroke="#a8a8a8" stroke-width="2"/><path d="M11.5 11.5L16 16" stroke="#a8a8a8" stroke-width="2"/></svg>
<div class="lb" style="left:28px;top:828px;">CODICE</div>
<div class="lb" style="left:150px;top:828px;">CONTO</div>
<div class="lb" style="left:402px;top:828px;">DESCRIZIONE</div>
<div class="lb" style="left:596px;top:828px;">DESCRIZIONE AGG</div>
<div class="lb" style="left:779px;top:828px;">DARE</div>
<div class="lb" style="left:886px;top:828px;">AVERE</div>
<div class="lb" style="left:992px;top:828px;">AN…</div>
<div class="lb" style="left:1043px;top:828px;">RI…</div>
<div class="lb" style="left:1085px;top:828px;">EN…</div>
<div class="lb" style="left:1132px;top:828px;">BL…</div>
<div class="lb" style="left:1184px;top:828px;">SPECIALE</div>
<div class="a" style="left:25px;top:853px;width:1259px;height:30px;background:#f0eafa"></div>
<div class="a" style="left:882px;top:853px;width:402px;height:30px;background:#e6ddf3"></div>
<div class="a" style="left:25px;top:883px;width:1218px;height:30px;background:#f5f5f5"></div>
<div class="a" style="left:1243px;top:883px;width:41px;height:30px;background:#fafafa"></div>
<div class="a" style="left:593px;top:853px;width:0;height:60px;border-left:1px dotted #c8c8c8"></div>
<div class="a" style="left:776px;top:853px;width:0;height:60px;border-left:1px dotted #c8c8c8"></div>
<div class="a" style="left:882px;top:853px;width:0;height:60px;border-left:1px dotted #c8c8c8"></div>
<div class="a" style="left:989px;top:853px;width:0;height:60px;border-left:1px dotted #c8c8c8"></div>
<div class="a" style="left:1082px;top:853px;width:0;height:60px;border-left:1px dotted #c8c8c8"></div>
<div class="a" style="left:1129px;top:853px;width:0;height:60px;border-left:1px dotted #c8c8c8"></div>
<div class="a" style="left:1181px;top:853px;width:0;height:60px;border-left:1px dotted #c8c8c8"></div>
<div class="a" style="left:127px;top:853px;width:20px;height:30px;border-left:1px dotted #c0c0c0;border-top:1px solid #d8d8d8;border-bottom:2px solid #d0d0d0;border-radius:0 2px 3px 0"></div>
<svg class="a" style="left:131.5px;top:864.5px" width="9" height="8" viewBox="0 0 9 8"><path d="M0 0H9L4.5 8z" fill="#222"/></svg>
<div class="a" style="left:380px;top:853px;width:20px;height:30px;border-left:1px dotted #c0c0c0;border-top:1px solid #d8d8d8;border-bottom:2px solid #d0d0d0;border-radius:0 2px 3px 0"></div>
<svg class="a" style="left:384.5px;top:864.5px" width="9" height="8" viewBox="0 0 9 8"><path d="M0 0H9L4.5 8z" fill="#222"/></svg>
<div class="a" style="left:1020px;top:853px;width:20px;height:30px;border-left:1px dotted #c0c0c0;border-top:1px solid #d8d8d8;border-bottom:2px solid #d0d0d0;border-radius:0 2px 3px 0"></div>
<svg class="a" style="left:1024.5px;top:864.5px" width="9" height="8" viewBox="0 0 9 8"><path d="M0 0H9L4.5 8z" fill="#222"/></svg>
<div class="a" style="left:127px;top:883px;width:20px;height:30px;border-left:1px dotted #c0c0c0;border-top:1px solid #d8d8d8;border-bottom:2px solid #d0d0d0;border-radius:0 2px 3px 0"></div>
<svg class="a" style="left:131.5px;top:894.5px" width="9" height="8" viewBox="0 0 9 8"><path d="M0 0H9L4.5 8z" fill="#222"/></svg>
<div class="a" style="left:380px;top:883px;width:20px;height:30px;border-left:1px dotted #c0c0c0;border-top:1px solid #d8d8d8;border-bottom:2px solid #d0d0d0;border-radius:0 2px 3px 0"></div>
<svg class="a" style="left:384.5px;top:894.5px" width="9" height="8" viewBox="0 0 9 8"><path d="M0 0H9L4.5 8z" fill="#222"/></svg>
<div class="a" style="left:1020px;top:883px;width:20px;height:30px;border-left:1px dotted #c0c0c0;border-top:1px solid #d8d8d8;border-bottom:2px solid #d0d0d0;border-radius:0 2px 3px 0"></div>
<svg class="a" style="left:1024.5px;top:894.5px" width="9" height="8" viewBox="0 0 9 8"><path d="M0 0H9L4.5 8z" fill="#222"/></svg>
<div class="a" style="left:594px;top:858px;width:138px;height:20px;background:#fff"></div>
<div class="a" style="left:28px;top:860px;font-size:14px;color:#222;white-space:nowrap;font-weight:bold;letter-spacing:-.2px">041.041.00001</div>
<div class="a" style="left:150px;top:859px;font-size:15px;color:#333;white-space:nowrap;letter-spacing:0">ACQUISTO PRESTAZIONI SVI...</div>
<div class="a" style="left:403px;top:859px;font-size:15px;color:#333;white-space:nowrap;letter-spacing:.3px">FATTURA ACQ.</div>
<div class="a" style="left:799px;top:859px;width:80px;text-align:right;font-size:15px;color:#2e7d32;white-space:nowrap;letter-spacing:.3px">99,00</div>
<div class="a" style="left:906px;top:859px;width:80px;text-align:right;font-size:15px;color:#2a2a5a;white-space:nowrap;letter-spacing:.3px">0,00</div>
<div class="a" style="left:1001px;top:858px;font-size:15px;color:#333;white-space:nowrap;letter-spacing:.3px">*</div>
<div class="a" style="left:1054px;top:857px;width:16px;height:16px;border:1.5px solid #c4c4c4;border-radius:3px;background:rgba(255,255,255,.35)"></div>
<div class="a" style="left:1098px;top:857px;width:16px;height:16px;border:1.5px solid #c4c4c4;border-radius:3px;background:rgba(255,255,255,.35)"></div>
<div class="a" style="left:1147px;top:857px;width:16px;height:16px;border:1.5px solid #c4c4c4;border-radius:3px;background:rgba(255,255,255,.35)"></div>
<div class="a" style="left:1054px;top:887px;width:16px;height:16px;border:1.5px solid #c4c4c4;border-radius:3px;background:rgba(255,255,255,.35)"></div>
<div class="a" style="left:1098px;top:887px;width:16px;height:16px;border:1.5px solid #c4c4c4;border-radius:3px;background:rgba(255,255,255,.35)"></div>
<div class="a" style="left:1147px;top:887px;width:16px;height:16px;border:1.5px solid #c4c4c4;border-radius:3px;background:rgba(255,255,255,.35)"></div>
<div class="a" style="left:1184px;top:859px;font-size:15px;color:#333;white-space:nowrap;letter-spacing:.3px">Rat/Risc</div>
<div class="a" style="left:1262px;top:865px;width:19px;height:5px;background:repeating-linear-gradient(90deg,#111 0 5px,transparent 5px 7px)"></div>
<div class="a" style="left:1262px;top:895px;width:19px;height:5px;background:repeating-linear-gradient(90deg,#111 0 5px,transparent 5px 7px)"></div>
<div class="a" style="left:1295px;top:856px;width:13px;height:59px;border-radius:7px;background:#dcdcdc;border:1px solid #cfcfcf"></div>
</body></html>
